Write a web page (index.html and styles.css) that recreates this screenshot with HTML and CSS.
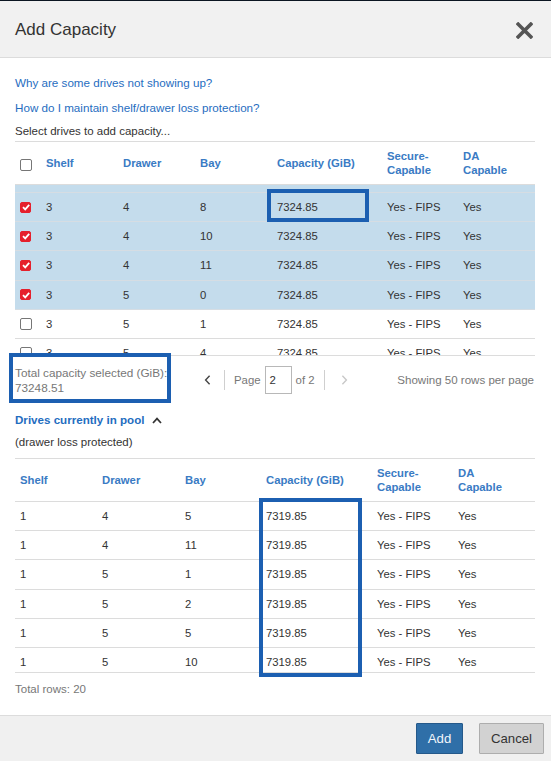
FILE: index.html
```html
<!DOCTYPE html>
<html lang="en">
<head>
<meta charset="utf-8">
<title>Add Capacity</title>
<link rel="stylesheet" href="styles.css">
</head>
<body>
<div class="modal">
  <header class="modal-head">
    <h1 class="title">Add Capacity</h1>
    <button class="close" aria-label="Close">
      <svg width="17" height="17" viewBox="0 0 17 17"><path d="M2.2 2.2 L14.8 14.8 M14.8 2.2 L2.2 14.8" stroke="#555" stroke-width="3.6" stroke-linecap="square" fill="none"/></svg>
    </button>
  </header>

  <main class="modal-body">
    <a class="link" href="#">Why are some drives not showing up?</a>
    <a class="link" href="#">How do I maintain shelf/drawer loss protection?</a>
    <p class="hint">Select drives to add capacity...</p>

    <table class="grid t1 head">
      <colgroup><col class="c-cb"><col class="c77"><col class="c77"><col class="c77"><col class="c110"><col class="c76"><col class="c77"></colgroup>
      <tr>
        <th><span class="cb hcb"></span></th>
        <th>Shelf</th><th>Drawer</th><th>Bay</th><th>Capacity (GiB)</th><th>Secure-<br>Capable</th><th>DA<br>Capable</th>
      </tr>
    </table>
    <div class="scroll">
      <table class="grid t1 body scrolled">
        <colgroup><col class="c-cb"><col class="c77"><col class="c77"><col class="c77"><col class="c110"><col class="c76"><col class="c77"></colgroup>
        <tr class="sel"><td><span class="cb on"><svg width="10" height="10" viewBox="0 0 10 10"><path d="M2 5.2 L4.2 7.4 L8.2 2.8" stroke="#fff" stroke-width="1.8" fill="none"/></svg></span></td><td>3</td><td>4</td><td>7</td><td>7324.85</td><td>Yes - FIPS</td><td>Yes</td></tr>
        <tr class="sel"><td><span class="cb on"><svg width="10" height="10" viewBox="0 0 10 10"><path d="M2 5.2 L4.2 7.4 L8.2 2.8" stroke="#fff" stroke-width="1.8" fill="none"/></svg></span></td><td>3</td><td>4</td><td>8</td><td>7324.85</td><td>Yes - FIPS</td><td>Yes</td></tr>
        <tr class="sel"><td><span class="cb on"><svg width="10" height="10" viewBox="0 0 10 10"><path d="M2 5.2 L4.2 7.4 L8.2 2.8" stroke="#fff" stroke-width="1.8" fill="none"/></svg></span></td><td>3</td><td>4</td><td>10</td><td>7324.85</td><td>Yes - FIPS</td><td>Yes</td></tr>
        <tr class="sel"><td><span class="cb on"><svg width="10" height="10" viewBox="0 0 10 10"><path d="M2 5.2 L4.2 7.4 L8.2 2.8" stroke="#fff" stroke-width="1.8" fill="none"/></svg></span></td><td>3</td><td>4</td><td>11</td><td>7324.85</td><td>Yes - FIPS</td><td>Yes</td></tr>
        <tr class="sel"><td><span class="cb on"><svg width="10" height="10" viewBox="0 0 10 10"><path d="M2 5.2 L4.2 7.4 L8.2 2.8" stroke="#fff" stroke-width="1.8" fill="none"/></svg></span></td><td>3</td><td>5</td><td>0</td><td>7324.85</td><td>Yes - FIPS</td><td>Yes</td></tr>
        <tr><td><span class="cb"></span></td><td>3</td><td>5</td><td>1</td><td>7324.85</td><td>Yes - FIPS</td><td>Yes</td></tr>
        <tr><td><span class="cb"></span></td><td>3</td><td>5</td><td>4</td><td>7324.85</td><td>Yes - FIPS</td><td>Yes</td></tr>
      </table>
    </div>

    <div class="pagebar">
      <div class="total">Total capacity selected (GiB):<br>73248.51</div>
      <div class="pager">
        <span class="nav prev"><svg width="7" height="10" viewBox="0 0 7 10"><path d="M5.6 0.8 L1.6 5 L5.6 9.2" stroke="#444" stroke-width="1.4" fill="none"/></svg></span>
        <span class="sep"></span>
        <span class="plabel">Page</span>
        <span class="pinput">2</span>
        <span class="plabel of">of 2</span>
        <span class="sep"></span>
        <span class="nav next"><svg width="7" height="10" viewBox="0 0 7 10"><path d="M1.4 0.8 L5.4 5 L1.4 9.2" stroke="#c8c8c8" stroke-width="1.4" fill="none"/></svg></span>
      </div>
      <div class="rows-per">Showing 50 rows per page</div>
    </div>

    <a class="pool-toggle" href="#">Drives currently in pool<svg width="10" height="7" viewBox="0 0 10 7"><path d="M1 6 L5 1.6 L9 6" stroke="#333" stroke-width="1.7" fill="none"/></svg></a>
    <p class="pool-note">(drawer loss protected)</p>

    <table class="grid t2 head">
      <colgroup><col class="c82"><col class="c83"><col class="c81"><col class="c111"><col class="c81"><col class="c82"></colgroup>
      <tr><th>Shelf</th><th>Drawer</th><th>Bay</th><th>Capacity (GiB)</th><th>Secure-<br>Capable</th><th>DA<br>Capable</th></tr>
    </table>
    <div class="scroll bottom">
      <table class="grid t2 body">
        <colgroup><col class="c82"><col class="c83"><col class="c81"><col class="c111"><col class="c81"><col class="c82"></colgroup>
        <tr><td>1</td><td>4</td><td>5</td><td>7319.85</td><td>Yes - FIPS</td><td>Yes</td></tr>
        <tr><td>1</td><td>4</td><td>11</td><td>7319.85</td><td>Yes - FIPS</td><td>Yes</td></tr>
        <tr><td>1</td><td>5</td><td>1</td><td>7319.85</td><td>Yes - FIPS</td><td>Yes</td></tr>
        <tr><td>1</td><td>5</td><td>2</td><td>7319.85</td><td>Yes - FIPS</td><td>Yes</td></tr>
        <tr><td>1</td><td>5</td><td>5</td><td>7319.85</td><td>Yes - FIPS</td><td>Yes</td></tr>
        <tr><td>1</td><td>5</td><td>10</td><td>7319.85</td><td>Yes - FIPS</td><td>Yes</td></tr>
      </table>
    </div>
    <p class="total-rows">Total rows: 20</p>
  </main>

  <footer class="modal-foot">
    <button class="btn primary">Add</button>
    <button class="btn secondary">Cancel</button>
  </footer>

  <div class="mark m1"></div>
  <div class="mark m2"></div>
  <div class="mark m3"></div>
</div>
</body>
</html>
```

FILE: styles.css
```css
* { box-sizing: border-box; margin: 0; padding: 0; }

html, body { height: 100%; }

body {
  background: #0b1521;
  font-family: "Liberation Sans", Arial, sans-serif;
  font-size: 11.3px;
  color: #333;
  overflow: hidden;
}

.modal {
  position: relative;
  margin-top: 1px;
  height: 760px;
  background: #fff;
  display: flex;
  flex-direction: column;
}

.modal-head {
  height: 57px;
  flex: none;
  background: #f1f1f1;
  border-bottom: 1px solid #dcdcdc;
  display: flex;
  align-items: center;
  justify-content: space-between;
  padding: 1px 18px 0 15px;
}

.title {
  font-size: 17px;
  font-weight: normal;
  color: #333;
}

.close {
  border: 0;
  background: none;
  width: 17px;
  height: 17px;
  display: flex;
  margin-top: 2px;
}

.modal-body {
  padding: 17px 15px 0;
}

.link {
  display: block;
  line-height: 16px;
  font-size: 11.65px;
  color: #1f6dbf;
  text-decoration: none;
}

.link + .link { margin-top: 9px; }

.hint {
  line-height: 16px;
  font-size: 11.5px;
  margin-top: 7px;
  margin-bottom: 2px;
}

/* tables */
.grid {
  width: 520px;
  table-layout: fixed;
  border-collapse: separate;
  border-spacing: 0;
}

.c-cb { width: 26px; }
.c76 { width: 76px; }
.c77 { width: 77px; }
.c81 { width: 81px; }
.c82 { width: 82px; }
.c83 { width: 83px; }
.c110 { width: 110px; }
.c111 { width: 111px; }

.grid th {
  padding: 7px 5px;
  line-height: 14px;
  text-align: left;
  vertical-align: middle;
  font-weight: bold;
  color: #3a7bc4;
  border-top: 1px solid #dcdcdc;
  border-bottom: 1px solid #dcdcdc;
}

.grid td {
  padding: 0 5px;
  line-height: 28.2px;
  border-bottom: 1px solid #dcdcdc;
  white-space: nowrap;
  vertical-align: middle;
}

.grid tr.sel td {
  background: #c4dcec;
  border-bottom-color: #d6dde3;
}

.scroll {
  height: 170px;
  overflow: hidden;
  width: 520px;
}

.scroll.bottom {
  height: 171px;
  border-bottom: 1px solid #dcdcdc;
}

.scrolled { margin-top: -21.2px; }

/* checkboxes */
.cb {
  display: inline-block;
  width: 12px;
  height: 12px;
  border: 1px solid #767676;
  border-radius: 2px;
  background: #fff;
  vertical-align: middle;
  position: relative;
  top: -1px;
}

.cb.hcb { top: 1px; }

.cb.on {
  width: 11px;
  height: 11px;
  background: #e5202c;
  border-color: #e5202c;
}

.cb svg {
  display: block;
  margin: -0.5px 0 0 -0.5px;
}

/* pagination */
.pagebar {
  width: 520px;
  height: 49px;
  border-top: 1px solid #dcdcdc;
  display: flex;
  align-items: center;
  color: #777;
}

.total {
  width: 185px;
  font-size: 11.75px;
  line-height: 15px;
  white-space: nowrap;
}

.pager {
  display: flex;
  align-items: center;
  font-size: 11.4px;
}

.nav {
  width: 14px;
  display: flex;
  justify-content: center;
}

.prev { margin-right: 10px; }

.sep {
  width: 1px;
  height: 20px;
  background: #cfcfcf;
}

.plabel { margin-left: 9px; }

.pinput {
  margin-left: 4px;
  width: 27px;
  height: 28px;
  border: 1px solid #b8b8b8;
  padding-left: 4px;
  line-height: 26px;
  color: #333;
}

.plabel.of { margin-left: 4px; margin-right: 9px; }

.next { margin-left: 13px; }

.rows-per {
  margin-left: auto;
  padding-right: 1px;
  font-size: 11.55px;
}

/* pool */
.pool-toggle {
  display: flex;
  align-items: center;
  gap: 7px;
  margin-top: 8px;
  line-height: 16px;
  font-size: 11.6px;
  font-weight: bold;
  color: #1f6dbf;
  text-decoration: none;
}

.pool-note {
  margin-top: 6px;
  line-height: 16px;
  font-size: 11.5px;
  margin-bottom: 8px;
}

.total-rows {
  margin-top: 8px;
  line-height: 16px;
  font-size: 11.5px;
  color: #777;
}

/* footer */
.modal-foot {
  margin-top: auto;
  height: 46px;
  flex: none;
  border-top: 1px solid #dcdcdc;
  background: #f0f0f0;
  display: flex;
  justify-content: flex-end;
  align-items: flex-start;
  gap: 16px;
  padding: 7px 7px 0 0;
}

.btn {
  height: 31px;
  font-family: "Liberation Sans", Arial, sans-serif;
  font-size: 13.2px;
  border-radius: 1px;
}

.btn.primary {
  width: 47px;
  background: #2f6fa8;
  border: 1px solid #25598a;
  color: #f2f6fa;
}

.btn.secondary {
  width: 65px;
  background: #d2d2d2;
  border: 1px solid #adadad;
  color: #333;
}

/* annotation boxes drawn over the dialog */
.mark {
  position: absolute;
  border: 4px solid #1c5fb1;
  pointer-events: none;
}

.m1 { left: 267px; top: 188px; width: 102px; height: 33px; }
.m2 { left: 9px; top: 352px; width: 162px; height: 50px; }
.m3 { left: 259px; top: 497px; width: 103px; height: 179px; }
```
